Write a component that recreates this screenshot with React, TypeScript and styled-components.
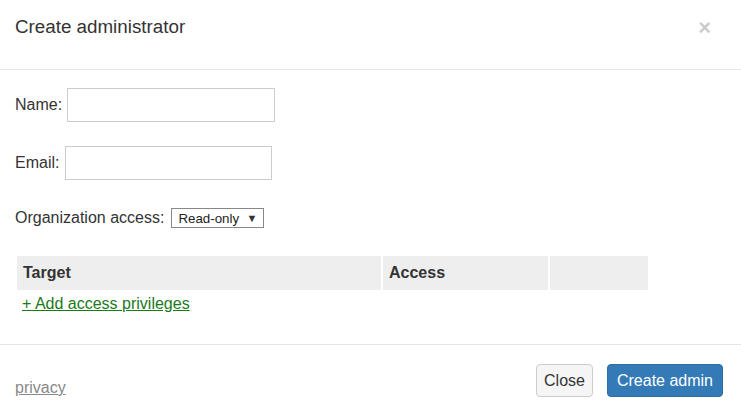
import React from 'react';
import styled, { createGlobalStyle } from 'styled-components';

const GlobalStyle = createGlobalStyle`
	* {
		box-sizing: border-box;
	}
	body {
		margin: 0;
		background: #fff;
		font-family: "Liberation Sans", Arial, Helvetica, sans-serif;
		font-size: 16px;
		line-height: 20px;
		color: #333;
	}
`;

const App = (): JSX.Element => {
	return (
		<>
			<GlobalStyle />
			<StyledModal>
				<StyledHeader>
					<StyledTitle>Create administrator</StyledTitle>
					<StyledClose type="button" aria-label="Close">×</StyledClose>
				</StyledHeader>
				<StyledBody>
					<StyledField $gap={5}>
						Name: <StyledInput type="text" />
					</StyledField>
					<StyledField $gap={6}>
						Email: <StyledInput type="text" $width={207} />
					</StyledField>
					<StyledAccessRow>
						Organization access:{' '}
						<StyledSelectWrap>
							<StyledSelect defaultValue="read">
								<option value="read">Read-only</option>
								<option value="full">Full</option>
								<option value="none">None</option>
							</StyledSelect>
							<StyledCaret>▼</StyledCaret>
						</StyledSelectWrap>
					</StyledAccessRow>
					<StyledTable>
						<thead>
							<tr>
								<StyledTh $width={364}>Target</StyledTh>
								<StyledTh $width={165}>Access</StyledTh>
								<StyledTh $width={98} />
							</tr>
						</thead>
					</StyledTable>
					<StyledAddLink href="#">+ Add access privileges</StyledAddLink>
				</StyledBody>
				<StyledFooter>
					<StyledPrivacy href="#">privacy</StyledPrivacy>
					<StyledActions>
						<StyledButton type="button">Close</StyledButton>
						<StyledButton type="button" $primary>
							Create admin
						</StyledButton>
					</StyledActions>
				</StyledFooter>
			</StyledModal>
		</>
	);
};

export default App;

const StyledModal = styled.div`
	width: 741px;
	height: 413px;
	display: flex;
	flex-direction: column;
	background: #fff;
`;

const StyledHeader = styled.div`
	height: 70px;
	padding: 17px 30px 0 15px;
	display: flex;
	justify-content: space-between;
	align-items: flex-start;
	border-bottom: 1px solid #e5e5e5;
`;

const StyledTitle = styled.h4`
	margin: 0;
	font-size: 18.8px;
	font-weight: normal;
	line-height: 20px;
	color: #333;
`;

const StyledClose = styled.button`
	margin-top: 1px;
	padding: 0;
	border: 0;
	background: transparent;
	font-family: inherit;
	font-size: 22px;
	font-weight: bold;
	line-height: 20px;
	color: #000;
	opacity: 0.2;
	cursor: pointer;
`;

const StyledBody = styled.div`
	padding: 18px 15px 0;
	flex: 1;
`;

const StyledField = styled.div<{ $gap: number }>`
	display: flex;
	align-items: center;
	gap: ${({ $gap }) => $gap}px;
	height: 34px;
	margin-bottom: 24px;
`;

const StyledInput = styled.input<{ $width?: number }>`
	width: ${({ $width }) => $width ?? 208}px;
	height: 34px;
	padding: 4px 8px;
	border: 1px solid #ccc;
	font-family: inherit;
	font-size: 16px;
	color: #333;
	outline: none;
`;

const StyledAccessRow = styled.div`
	display: flex;
	align-items: center;
	gap: 7px;
	height: 20px;
	margin-top: 28px;
`;

const StyledSelectWrap = styled.span`
	position: relative;
	display: inline-flex;
`;

const StyledSelect = styled.select`
	appearance: none;
	width: 93px;
	height: 20px;
	padding: 0 20px 0 6px;
	border: 1px solid #888;
	border-radius: 0;
	background: #fff;
	font-family: inherit;
	font-size: 13.33px;
	color: #222;
	outline: none;
`;

const StyledCaret = styled.span`
	position: absolute;
	top: 3px;
	right: 7px;
	font-size: 11px;
	line-height: 14px;
	color: #333;
	pointer-events: none;
`;

const StyledTable = styled.table`
	margin-top: 26px;
	border-spacing: 2px;
`;

const StyledTh = styled.th<{ $width: number }>`
	width: ${({ $width }) => $width}px;
	height: 34px;
	padding: 0 6px;
	background: #eee;
	text-align: left;
	font-size: 16px;
	font-weight: bold;
	color: #333;
`;

const StyledAddLink = styled.a`
	display: inline-block;
	margin: 2px 0 0 7px;
	color: #1a7a1a;
	text-decoration: underline;
	line-height: 20px;
`;

const StyledFooter = styled.div`
	height: 69px;
	padding: 19px 18px 16px 15px;
	display: flex;
	justify-content: space-between;
	align-items: flex-end;
	border-top: 1px solid #e5e5e5;
`;

const StyledPrivacy = styled.a`
	color: #888;
	text-decoration: underline;
	line-height: 20px;
	margin-bottom: -1px;
`;

const StyledActions = styled.div`
	display: flex;
	gap: 14px;
`;

const StyledButton = styled.button<{ $primary?: boolean }>`
	height: 33px;
	padding: 0 ${({ $primary }) => ($primary ? 9 : 7)}px;
	border: 1px solid ${({ $primary }) => ($primary ? '#2e6da4' : '#ccc')};
	border-radius: 4px;
	background: ${({ $primary }) => ($primary ? '#337ab7' : '#f5f5f5')};
	color: ${({ $primary }) => ($primary ? '#fff' : '#333')};
	font-family: inherit;
	font-size: 16px;
	line-height: 20px;
	cursor: pointer;
`;
